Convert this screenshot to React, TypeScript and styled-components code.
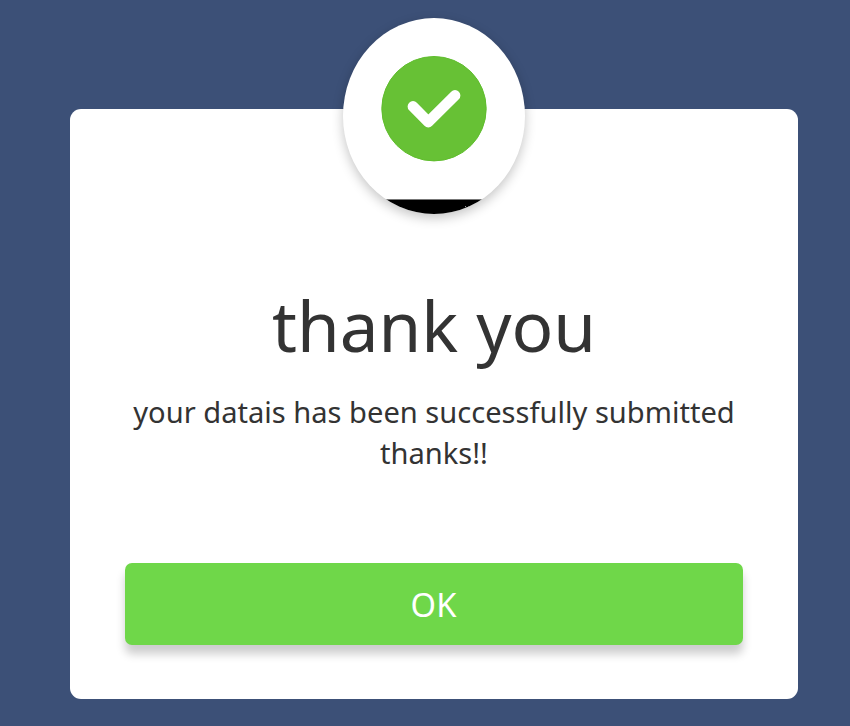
import React from "react";
import styled, { createGlobalStyle } from "styled-components";

const GlobalStyle = createGlobalStyle`
  * { box-sizing: border-box; }
  body { margin: 0; background: #3c5077; font-family: "Noto Sans", sans-serif; overflow: hidden; }
`;

const Page = styled.main`
  height: 726px;
  padding: 109px 52px 0 70px;
  background: #3c5077;
`;

const Popup = styled.section`
  height: 590px;
  padding: 0 55px;
  border-radius: 11px;
  background: #fff;
  color: #333;
  text-align: center;
  display: flex;
  flex-direction: column;
  align-items: center;
`;

const Badge = styled.div`
  flex: none;
  width: 182px;
  height: 196px;
  margin-top: -91px;
  border-radius: 50%;
  overflow: hidden;
  background: #fff;
  box-shadow: 0 4px 12px rgba(0, 0, 0, 0.23);
  svg { display: block; }
`;

const Title = styled.h1`
  margin: 64px 0 0;
  font-size: 69.2px;
  line-height: 95px;
  font-weight: 400;
`;

const Message = styled.p`
  margin: 19px 0 0;
  font-size: 29.1px;
  line-height: 41px;
  white-space: nowrap;
`;

const OkButton = styled.button`
  width: 100%;
  height: 82px;
  margin-top: 89px;
  padding: 0 1px 0 0;
  border: 0;
  border-radius: 7px;
  background: #6fd749;
  color: #fff;
  font-family: inherit;
  font-size: 32.7px;
  box-shadow: 0 9px 10px rgba(0, 0, 0, 0.2);
`;

export default function App() {
  return (
    <Page>
      <GlobalStyle />
      <Popup>
        <Badge>
          <svg width="182" height="196" viewBox="0 0 182 196">
            <circle cx="91" cy="90.7" r="52.2" fill="#67c135" stroke="#60bd2e" strokeWidth="1" />
            <path d="M70 88.500L85.300 104L112 77.500" fill="none" stroke="#fff" strokeWidth="10.800" strokeLinecap="round" strokeLinejoin="round" />
            <rect y="181" width="182" height="1" fill="#777" />
            <rect y="182" width="182" height="14" fill="#000" />
            <path d="M122 188.500h1M123 189.500h1M125 188.500h1" stroke="#999" />
          </svg>
        </Badge>
        <Title>thank you</Title>
        <Message>your datais has been successfully submitted<br />thanks!!</Message>
        <OkButton>OK</OkButton>
      </Popup>
    </Page>
  );
}
